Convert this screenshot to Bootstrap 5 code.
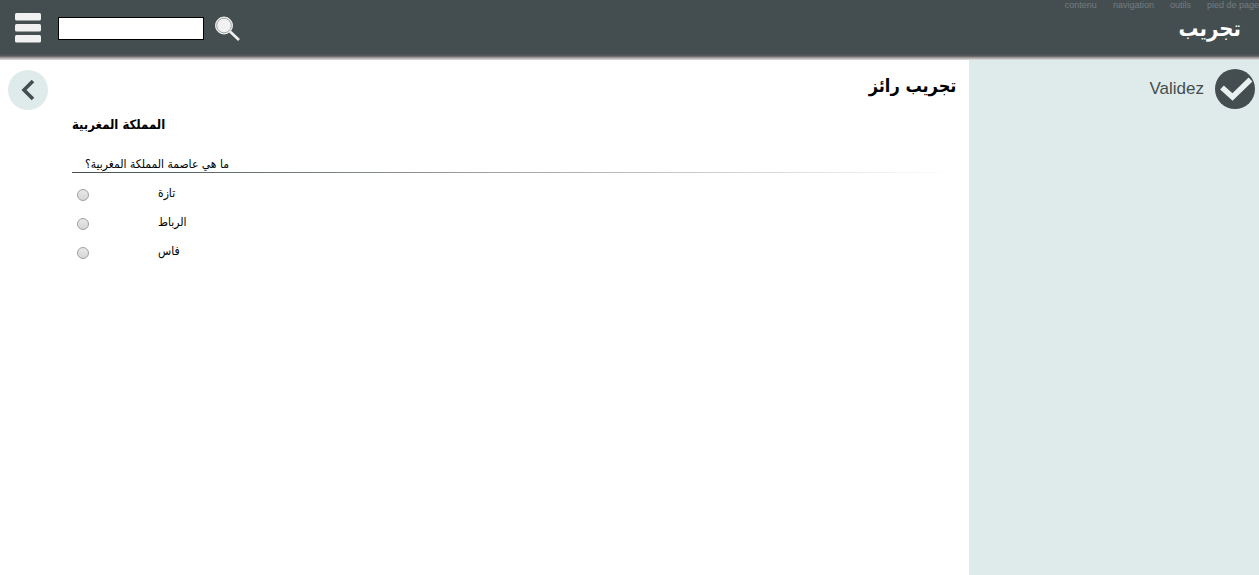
<!DOCTYPE html>
<html lang="fr">
<head>
<meta charset="utf-8">
<meta name="viewport" content="width=device-width, initial-scale=1">
<title>تجريب رائز</title>
<link href="https://cdn.jsdelivr.net/npm/bootstrap@5.3.0/dist/css/bootstrap.min.css" rel="stylesheet">
<style>
:root { --slate: #444e51; --mist: #dfebea; }
body { font-family: "Liberation Sans", "DejaVu Sans Condensed", "DejaVu Sans", sans-serif; font-size: 12px; line-height: 16px; color: #000; background: #fff; }
:lang(ar) { font-family: "DejaVu Sans Condensed", "DejaVu Sans", sans-serif; }
.topbar { height: 60px; padding: 0 18px 4px 14px; background: linear-gradient(var(--slate) 54px, #5c5c5e 56px, #aaa5a5 58px, #e2e0e0 60px); }
.search-input { width: 146px; height: 23px; border: 1px solid #000; background: #fff; }
.bare { padding: 0; border: 0; background: none; line-height: 0; }
.skip-links { gap: 16px; font-size: 9px; line-height: 10px; }
.skip-links a { color: #747c7f; text-decoration: none; }
.site-title { padding-top: 2px; font-size: 22px; line-height: 32px; font-weight: 700; color: #fff; }
.side-nav { padding: 10px 0 0 8px; width: 72px; }
.tools { width: 23%; padding: 9px 4px 0; background: var(--mist); }
.validate { gap: 11px; font-size: 17px; line-height: 24px; color: var(--slate); }
.content-area { padding: 12px 13px 0 0; }
.page-title { font-size: 18px; line-height: 28px; font-weight: 700; }
.block-title { font-size: 13px; line-height: 20px; font-weight: 700; margin: 15px 0 21px; }
.question { padding: 0 13px; line-height: 16px; }
.rule { height: 1px; background: linear-gradient(90deg, #444e51, #fff); }
.answers { padding: 5px 0 0 5px; }
.answer { height: 29px; gap: 69px; }
.answer input { appearance: none; width: 12px; height: 12px; margin: 5px 0 0; border: 1px solid #a0a0a0; border-radius: 50%; background: linear-gradient(#e8e8e8, #d6d6d6); }
.answer input:checked { background: radial-gradient(#444 35%, #ddd 40%); }
</style>
</head>
<body class="d-flex flex-column min-vh-100">
<header class="topbar d-flex align-items-center position-relative">
  <button class="bare" type="button" aria-label="Menu">
    <svg width="28" height="32" viewBox="0 0 28 32" fill="#f1f1f1"><rect x="1" y="1" width="26" height="7.500" rx="1.5"/><rect x="1" y="12" width="26" height="7.500" rx="1.5"/><rect x="1" y="23" width="26" height="7.500" rx="1.5"/></svg>
  </button>
  <form class="d-flex align-items-center ms-3" role="search" onsubmit="return false">
    <input class="search-input" type="text" aria-label="Rechercher">
    <button class="bare ms-2" type="submit" aria-label="Lancer la recherche">
      <svg width="32" height="32" viewBox="0 0 32 32"><circle cx="12" cy="13.500" r="8.5" fill="#f1f1f1" stroke="#f1f1f1"/><circle cx="12" cy="13.500" r="7.3" fill="none" stroke="#8d9496" stroke-width=".8"/><path d="M18 19.500L27 28" stroke="#f1f1f1" stroke-width="2.6"/></svg>
    </button>
  </form>
  <h1 class="site-title ms-auto mb-0" lang="ar" dir="rtl">تجريب</h1>
  <nav class="skip-links d-flex position-absolute top-0 end-0" aria-label="Accès rapide">
    <a href="#content">contenu</a><a href="#nav">navigation</a><a href="#tools">outils</a><a href="#footer">pied de page</a>
  </nav>
</header>
<div class="d-flex flex-grow-1">
  <nav id="nav" class="side-nav flex-shrink-0" aria-label="Navigation">
    <a class="d-inline-block" href="#back" aria-label="Précédent"><svg class="d-block" width="40" height="40" viewBox="0 0 40 40"><circle cx="20" cy="20" r="20" fill="#dfebea"/><path d="M25 11L16 20L25 29" fill="none" stroke="#444e51" stroke-width="3.6"/></svg></a>
  </nav>
  <main id="content" class="content-area flex-grow-1">
    <h2 class="page-title mb-0" lang="ar" dir="rtl">تجريب رائز</h2>
    <h3 class="block-title" lang="ar">المملكة المغربية</h3>
    <form lang="ar">
      <div class="question" id="q"><bdi dir="rtl">ما هي عاصمة المملكة المغربية؟</bdi></div>
      <div class="rule"></div>
      <div class="answers" role="radiogroup" aria-labelledby="q">
        <div class="answer d-flex align-items-center"><input type="radio" name="city" id="c1"><label for="c1">تازة</label></div>
        <div class="answer d-flex align-items-center"><input type="radio" name="city" id="c2"><label for="c2">الرباط</label></div>
        <div class="answer d-flex align-items-center"><input type="radio" name="city" id="c3"><label for="c3">فاس</label></div>
      </div>
    </form>
  </main>
  <aside id="tools" class="tools flex-shrink-0">
    <button class="bare validate d-flex align-items-center ms-auto" type="button">Validez
      <svg width="40" height="40" viewBox="0 0 40 40"><circle cx="20" cy="20" r="20" fill="#444e51"/><path d="M7 18.500L17.500 28L35.500 10.500" fill="none" stroke="#e9f1f0" stroke-width="5.500"/></svg>
    </button>
  </aside>
</div>
<script src="https://cdn.jsdelivr.net/npm/bootstrap@5.3.0/dist/js/bootstrap.bundle.min.js"></script>
</body>
</html>
